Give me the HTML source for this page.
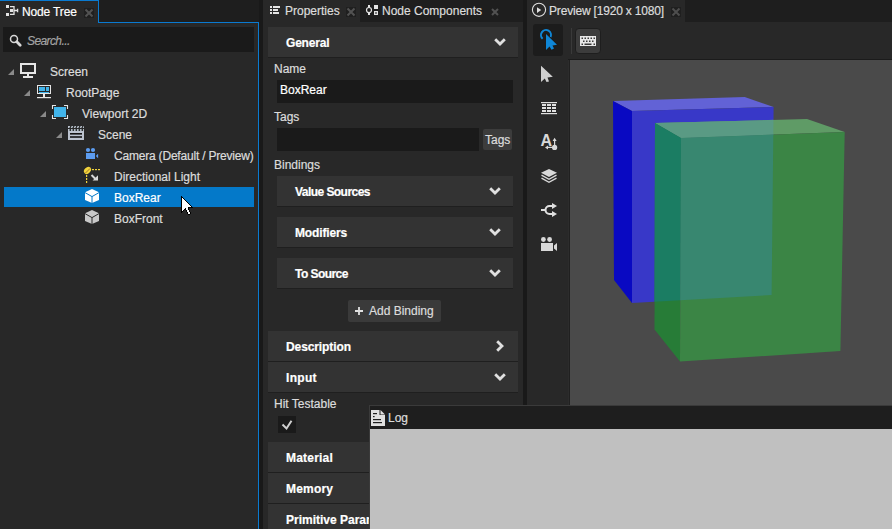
<!DOCTYPE html>
<html><head><meta charset="utf-8">
<style>
*{margin:0;padding:0;box-sizing:border-box}
html,body{width:892px;height:529px;overflow:hidden;background:#1e1e1e;position:relative;font-family:"Liberation Sans",sans-serif}
.a{position:absolute}
.t{position:absolute;font-size:12px;line-height:12px;white-space:nowrap;color:#dcdcdc;-webkit-text-stroke:0.2px currentColor}
.b{font-weight:bold;color:#fff}
.hdr{position:absolute;background:#333;border-bottom:1px solid #1f1f1f;height:31px}
svg{position:absolute;overflow:visible}
</style></head><body>

<!-- ============ NODE TREE PANEL ============ -->
<div class="a" style="left:0;top:0;width:258px;height:529px;background:#282828"></div>
<div class="a" style="left:99px;top:0;width:160px;height:22px;background:#1e1e1e"></div>
<div class="a" style="left:0;top:0;width:99px;height:1px;background:#0a7ad0"></div>
<div class="a" style="left:98px;top:0;width:1px;height:23px;background:#0a7ad0"></div>
<div class="a" style="left:98px;top:22px;width:161px;height:1px;background:#0a7ad0"></div>
<div class="a" style="left:258px;top:22px;width:1px;height:507px;background:#0a7ad0"></div>
<div class="t" style="left:22px;top:6px;color:#fff;letter-spacing:-0.15px">Node Tree</div>

<!-- search -->
<div class="a" style="left:3px;top:27px;width:251px;height:25px;background:#1a1a1a"></div>
<div class="t" style="left:27px;top:35px;font-style:italic;color:#a4a4a4;letter-spacing:-0.6px">Search...</div>

<!-- selection -->
<div class="a" style="left:4px;top:187px;width:250px;height:20px;background:#0479c9"></div>

<div class="t" style="left:50px;top:66px">Screen</div>
<div class="t" style="left:66px;top:87px">RootPage</div>
<div class="t" style="left:82px;top:108px">Viewport 2D</div>
<div class="t" style="left:98px;top:129px">Scene</div>
<div class="t" style="left:114px;top:150px;letter-spacing:-0.2px">Camera (Default / Preview)</div>
<div class="t" style="left:114px;top:171px">Directional Light</div>
<div class="t" style="left:114px;top:192px;color:#fff">BoxRear</div>
<div class="t" style="left:114px;top:213px">BoxFront</div>

<!-- ============ PROPERTIES PANEL ============ -->
<div class="a" style="left:259px;top:0;width:4px;height:529px;background:#191919"></div>
<div class="a" style="left:523px;top:0;width:4px;height:405px;background:#191919"></div>
<div class="a" style="left:263px;top:0;width:97px;height:22px;background:#282828"></div>
<div class="a" style="left:263px;top:22px;width:260px;height:507px;background:#282828"></div>
<div class="t" style="left:285px;top:5px">Properties</div>
<div class="t" style="left:382px;top:5px">Node Components</div>

<div class="hdr" style="left:268px;top:27px;width:250px;"></div>
<div class="t b" style="letter-spacing:-0.2px;left:286px;top:37px">General</div>
<div class="t" style="left:274px;top:63px">Name</div>
<div class="a" style="left:277px;top:80px;width:236px;height:23px;background:#1a1a1a"></div>
<div class="t" style="left:280px;top:84px;color:#fff">BoxRear</div>
<div class="t" style="left:274px;top:111px">Tags</div>
<div class="a" style="left:277px;top:128px;width:202px;height:23px;background:#1a1a1a"></div>
<div class="a" style="left:483px;top:129px;width:29px;height:21px;background:#3c3c3c;border-radius:2px"></div>
<div class="t" style="left:485px;top:134px">Tags</div>
<div class="t" style="left:274px;top:159px">Bindings</div>

<div class="hdr" style="left:277px;top:176px;width:236px;"></div>
<div class="t b" style="letter-spacing:-0.55px;left:295px;top:186px">Value Sources</div>
<div class="hdr" style="left:277px;top:217px;width:236px;"></div>
<div class="t b" style="letter-spacing:-0.15px;left:295px;top:227px">Modifiers</div>
<div class="hdr" style="left:277px;top:258px;width:236px;"></div>
<div class="t b" style="letter-spacing:-0.55px;left:295px;top:268px">To Source</div>

<div class="a" style="left:348px;top:300px;width:93px;height:22px;background:#3a3a3a;border-radius:2px"></div>
<div class="t" style="left:369px;top:305px">Add Binding</div>

<div class="hdr" style="left:268px;top:331px;width:250px;"></div>
<div class="t b" style="letter-spacing:-0.1px;left:286px;top:341px">Description</div>
<div class="hdr" style="left:268px;top:362px;width:250px;"></div>
<div class="t b" style="letter-spacing:0.3px;left:286px;top:372px">Input</div>
<div class="t" style="left:274px;top:398px">Hit Testable</div>
<div class="a" style="left:278px;top:416px;width:18px;height:17px;background:#1a1a1a"></div>

<div class="hdr" style="left:268px;top:442px;width:250px;"></div>
<div class="t b" style="letter-spacing:0.2px;left:286px;top:452px">Material</div>
<div class="hdr" style="left:268px;top:473px;width:250px;"></div>
<div class="t b" style="letter-spacing:0.2px;left:286px;top:483px">Memory</div>
<div class="hdr" style="left:268px;top:504px;width:250px;"></div>
<div class="t b" style="left:286px;top:514px">Primitive Parameters</div>

<!-- ============ PREVIEW PANEL ============ -->
<div class="a" style="left:527px;top:0;width:158px;height:22px;background:#282828"></div>
<div class="a" style="left:527px;top:22px;width:365px;height:383px;background:#282828"></div>
<div class="t" style="left:549px;top:5px;letter-spacing:-0.18px">Preview [1920 x 1080]</div>
<div class="a" style="left:533px;top:24px;width:30px;height:32px;background:#1c1c1c;border-radius:3px"></div>
<div class="a" style="left:571px;top:28px;width:1px;height:26px;background:#3a3a3a"></div>
<div class="a" style="left:575px;top:28px;width:26px;height:26px;background:#3c3c3c;border:1px solid #1e1e1e;border-radius:4px"></div>
<div class="a" style="left:568px;top:59px;width:324px;height:346px;background:#202020"></div>
<div class="a" style="left:568px;top:60px;width:1px;height:345px;background:#2c2c2c"></div>
<div class="a" style="left:568px;top:59px;width:324px;height:1px;background:#1b1b1b"></div>
<div class="a" style="left:570px;top:60px;width:322px;height:345px;background:#4a4a4a"></div>


<svg style="left:0;top:0" width="892" height="529" viewBox="0 0 892 529">
<defs><clipPath id="bf"><polygon points="632,111 773.6,107 771.6,295 632,303"/></clipPath></defs>
<polygon points="613,101 744.7,97 773.6,107 632,111" fill="#6262d6"/>
<polygon points="613,101 632,111 632,303 614,280" fill="#0909c2"/>
<polygon points="632,111 773.6,107 771.6,295 632,303" fill="#3838c8"/>
<polygon points="655,123 807,119 844.7,132 681,138" fill="#5f9b66"/>
<polygon points="655,123 681,138 680,361.5 654.5,329.6" fill="#277c37"/>
<polygon points="681,138 844.7,132 840.4,351 680,361.5" fill="#3b8545"/>
<g clip-path="url(#bf)">
<polygon points="655,123 807,119 844.7,132 681,138" fill="#5a9a84"/>
<polygon points="655,123 681,138 680,361.5 654.5,329.6" fill="#1b7d63"/>
<polygon points="681,138 844.7,132 840.4,351 680,361.5" fill="#388770"/>
</g>
</svg>


<!-- ICONS -->
<svg style="left:0;top:0" width="892" height="529" viewBox="0 0 892 529">
<!-- node tree tab icon -->
<g fill="#e4e4e4"><rect x="6" y="5" width="3" height="3"/><rect x="10" y="9" width="3" height="3"/><rect x="6" y="13" width="3" height="3"/></g>
<path d="M10 6.6H14V14.4H10M14 10.5H17.5M17.6 8.8V12.2" stroke="#e4e4e4" stroke-width="1.3" fill="none"/>
<!-- close X node tree -->
<rect x="84" y="8" width="10" height="10" fill="#1f1f1f"/>
<path d="M85.5 9.5L92.5 16.5M92.5 9.5L85.5 16.5" stroke="#525252" stroke-width="2"/>
<!-- search -->
<circle cx="14" cy="39" r="3.5" stroke="#d8d8d8" stroke-width="1.5" fill="none"/>
<path d="M16.8 41.8L20.2 45.2" stroke="#d8d8d8" stroke-width="2.8" stroke-linecap="round"/>
<!-- expanders -->
<g fill="#8a8a8a">
<polygon points="8,75 14,69 14,75"/>
<polygon points="24,96 30,90 30,96"/>
<polygon points="40,117 46,111 46,117"/>
<polygon points="56,138 62,132 62,138"/>
</g>
<!-- screen icon -->
<g fill="#e6e6e6">
<path d="M20 63H36V74H20ZM22 65V72H34V65Z" fill-rule="evenodd"/>
<rect x="27" y="74" width="2" height="2"/><rect x="23" y="76" width="10" height="2"/>
</g>
<!-- rootpage icon -->
<path d="M37 85H51V94H37ZM38 86V93H50V86Z" fill="#e6e6e6" fill-rule="evenodd"/>
<rect x="43" y="94" width="2" height="3" fill="#e6e6e6"/><rect x="37" y="97" width="14" height="1.2" fill="#e6e6e6"/>
<g fill="#42b4ea"><rect x="39" y="87" width="6" height="4"/><rect x="46" y="87" width="3" height="4"/><rect x="39" y="92" width="10" height="1"/></g>
<!-- viewport icon -->
<rect x="54" y="107" width="12" height="10" fill="#42b4ea"/>
<path d="M52.5 109V105.5H56M64 105.5H67.5V109M67.5 115V118.5H64M56 118.5H52.5V115" stroke="#e6e6e6" stroke-width="1.1" fill="none"/>
<!-- scene clapper -->
<rect x="68" y="126" width="16" height="2" fill="#bcc3cf"/>
<rect x="68" y="129" width="16" height="11" fill="#bcc3cf"/>
<g fill="#141414"><rect x="70" y="133" width="12" height="1.6"/><rect x="70" y="136.2" width="12" height="1.6"/></g>
<g fill="#1a1f1c">
<path d="M69.3 128L70.3 126H71.6L70.6 128Z"/><path d="M72.3 128L73.3 126H74.6L73.6 128Z"/><path d="M75.3 128L76.3 126H77.6L76.6 128Z"/><path d="M78.3 128L79.3 126H80.6L79.6 128Z"/><path d="M81.3 128L82.3 126H83.6L82.6 128Z"/>
<circle cx="70.3" cy="130" r="0.9"/><circle cx="73.3" cy="130" r="0.9"/><circle cx="76.3" cy="130" r="0.9"/><circle cx="79.3" cy="130" r="0.9"/><circle cx="82.3" cy="130" r="0.9"/>
</g>
<!-- camera -->
<g fill="#5c9cf0"><circle cx="88" cy="150" r="2.1"/><circle cx="93" cy="150" r="2.1"/><rect x="86" y="153" width="9" height="6"/><polygon points="95.8,156 98.1,153.8 98.1,158.3"/></g>
<!-- directional light -->
<ellipse cx="87.5" cy="170.4" rx="4" ry="3" transform="rotate(-45 87.5 170.4)" fill="#f2d43c"/>
<path d="M85.5 173L90 168.5" stroke="#8a5a20" stroke-width="0.8"/>
<g fill="#f2d43c"><rect x="92" y="169" width="2" height="1.2"/><rect x="95" y="169" width="2" height="1.2"/><rect x="98" y="169" width="2" height="1.2"/>
<rect x="86" y="175" width="1.2" height="2"/><rect x="86" y="178" width="1.2" height="2"/><rect x="86" y="181" width="1.2" height="2"/></g>
<path d="M91.5 175L95.5 179" stroke="#d8d8d8" stroke-width="2"/>
<polygon points="98,175.3 98,180.6 92.6,180.6" fill="#d8d8d8"/>
<!-- box icons -->
<polygon points="92,189 99,192.2 99,200 92,203 85,200 85,192.2" fill="#fff"/>
<path d="M85 192.6L92 196.6L99 192.6M92 196.6V203" stroke="#0479c9" stroke-width="1" fill="none"/>
<polygon points="92,210 99,213.2 99,221 92,224 85,221 85,213.2" fill="#c8c8c8"/>
<path d="M85 213.6L92 217.6L99 213.6M92 217.6V224" stroke="#282828" stroke-width="1" fill="none"/>
<!-- cursor -->
<path d="M181 196h1v1h-1zM181 197h1v1h-1zM182 197h1v1h-1zM181 198h1v1h-1zM183 198h1v1h-1zM181 199h1v1h-1zM184 199h1v1h-1zM181 200h1v1h-1zM185 200h1v1h-1zM181 201h1v1h-1zM186 201h1v1h-1zM181 202h1v1h-1zM187 202h1v1h-1zM181 203h1v1h-1zM188 203h1v1h-1zM181 204h1v1h-1zM189 204h1v1h-1zM181 205h1v1h-1zM190 205h1v1h-1zM181 206h1v1h-1zM191 206h1v1h-1zM181 207h1v1h-1zM188 207h1v1h-1zM189 207h1v1h-1zM190 207h1v1h-1zM191 207h1v1h-1zM192 207h1v1h-1zM181 208h1v1h-1zM185 208h1v1h-1zM188 208h1v1h-1zM181 209h1v1h-1zM184 209h1v1h-1zM185 209h1v1h-1zM188 209h1v1h-1zM181 210h1v1h-1zM183 210h1v1h-1zM186 210h1v1h-1zM189 210h1v1h-1zM181 211h1v1h-1zM182 211h1v1h-1zM186 211h1v1h-1zM189 211h1v1h-1zM181 212h1v1h-1zM187 212h1v1h-1zM190 212h1v1h-1zM187 213h1v1h-1zM190 213h1v1h-1zM188 214h1v1h-1zM189 214h1v1h-1z" fill="#000"/><path d="M182 198h1v1h-1zM182 199h1v1h-1zM183 199h1v1h-1zM182 200h1v1h-1zM183 200h1v1h-1zM184 200h1v1h-1zM182 201h1v1h-1zM183 201h1v1h-1zM184 201h1v1h-1zM185 201h1v1h-1zM182 202h1v1h-1zM183 202h1v1h-1zM184 202h1v1h-1zM185 202h1v1h-1zM186 202h1v1h-1zM182 203h1v1h-1zM183 203h1v1h-1zM184 203h1v1h-1zM185 203h1v1h-1zM186 203h1v1h-1zM187 203h1v1h-1zM182 204h1v1h-1zM183 204h1v1h-1zM184 204h1v1h-1zM185 204h1v1h-1zM186 204h1v1h-1zM187 204h1v1h-1zM188 204h1v1h-1zM182 205h1v1h-1zM183 205h1v1h-1zM184 205h1v1h-1zM185 205h1v1h-1zM186 205h1v1h-1zM187 205h1v1h-1zM188 205h1v1h-1zM189 205h1v1h-1zM182 206h1v1h-1zM183 206h1v1h-1zM184 206h1v1h-1zM185 206h1v1h-1zM186 206h1v1h-1zM187 206h1v1h-1zM188 206h1v1h-1zM189 206h1v1h-1zM190 206h1v1h-1zM182 207h1v1h-1zM183 207h1v1h-1zM184 207h1v1h-1zM185 207h1v1h-1zM186 207h1v1h-1zM187 207h1v1h-1zM182 208h1v1h-1zM183 208h1v1h-1zM184 208h1v1h-1zM186 208h1v1h-1zM187 208h1v1h-1zM182 209h1v1h-1zM183 209h1v1h-1zM186 209h1v1h-1zM187 209h1v1h-1zM182 210h1v1h-1zM187 210h1v1h-1zM188 210h1v1h-1zM187 211h1v1h-1zM188 211h1v1h-1zM188 212h1v1h-1zM189 212h1v1h-1zM188 213h1v1h-1zM189 213h1v1h-1z" fill="#fff"/>

<!-- properties tab icon -->
<g fill="#e4e4e4"><rect x="270" y="6" width="2" height="2"/><rect x="270" y="9" width="2" height="2"/><rect x="270" y="12" width="2" height="2"/>
<rect x="273" y="6" width="7" height="2"/><rect x="273" y="9" width="5" height="2"/><rect x="273" y="12" width="6" height="2"/></g>
<rect x="346" y="7" width="10" height="10" fill="#1f1f1f"/>
<path d="M347.5 8.5L354.5 15.5M354.5 8.5L347.5 15.5" stroke="#525252" stroke-width="2"/>
<!-- node components icon -->
<path d="M369 5V7.5M369 12.5V15" stroke="#e4e4e4" stroke-width="2"/>
<circle cx="369" cy="10" r="2.5" stroke="#e4e4e4" stroke-width="1.2" fill="none"/>
<rect x="374" y="5" width="4" height="4" fill="#e4e4e4"/>
<path d="M374 11H378V15H374ZM375.3 12.3V13.7H376.7V12.3Z" fill="#e4e4e4" fill-rule="evenodd"/>
<path d="M492 9L498 15M498 9L492 15" stroke="#525252" stroke-width="2"/>

<!-- chevrons -->
<g stroke="#e0e0e0" stroke-width="2.8" fill="none">
<path d="M495.2 39.2L500 44L504.8 39.2"/>
<path d="M490.2 188.2L495 193L499.8 188.2"/>
<path d="M490.2 229.2L495 234L499.8 229.2"/>
<path d="M490.2 270.2L495 275L499.8 270.2"/>
<path d="M497.2 341.2L502 346L497.2 350.8"/>
<path d="M495.2 374.2L500 379L504.8 374.2"/>
</g>
<!-- plus -->
<path d="M355 311H363M359 307V315" stroke="#e0e0e0" stroke-width="1.8"/>
<!-- checkmark -->
<path d="M282.5 424.5L286.5 428.5L291.5 420.8" stroke="#d0d0d0" stroke-width="2" fill="none"/>

<!-- preview tab icon -->
<circle cx="539" cy="9.8" r="6.6" stroke="#e0e0e0" stroke-width="1.1" fill="none"/>
<polygon points="537,7.2 537,13 541.2,10.1" fill="#e0e0e0"/>
<rect x="671" y="7" width="10" height="10" fill="#1f1f1f"/>
<path d="M672.5 8.5L679.5 15.5M679.5 8.5L672.5 15.5" stroke="#4e4e4e" stroke-width="2"/>
<!-- select tool -->
<path d="M542.65 38.72A5 5 0 1 1 550.57 37.03" stroke="#0f86d6" stroke-width="2" fill="none"/>
<path d="M546 34L557 44.7L552.5 45.5L554 48.5L551.5 49.8L549.5 46.5L546 50Z" fill="#0f86d6" stroke="#1c1c1c" stroke-width="1.4" paint-order="stroke"/>
<!-- keyboard -->
<path d="M580 36H596V46H580Z" fill="#e8e8e8"/>
<g fill="#3a3a3a"><rect x="581.5" y="37.5" width="1.5" height="1.5"/><rect x="584.5" y="37.5" width="1.5" height="1.5"/><rect x="587.5" y="37.5" width="1.5" height="1.5"/><rect x="590.5" y="37.5" width="1.5" height="1.5"/><rect x="593.5" y="37.5" width="1.5" height="1.5"/>
<rect x="583" y="40.5" width="1.5" height="1.5"/><rect x="586" y="40.5" width="1.5" height="1.5"/><rect x="589" y="40.5" width="1.5" height="1.5"/><rect x="592" y="40.5" width="1.5" height="1.5"/>
<rect x="581.5" y="43.5" width="1.5" height="1.5"/><rect x="584.5" y="43.5" width="7" height="1.5"/><rect x="593.5" y="43.5" width="1.5" height="1.5"/></g>
<!-- sidebar arrow -->
<path d="M541 65.7L552.8 76.8L547.5 77.5L549 81.5L546.5 82L544.8 78.5L541 82Z" fill="#d0d0d0"/>
<!-- grid -->
<g fill="#e0e0e0"><rect x="541" y="102" width="16" height="1.2"/><rect x="541" y="113" width="16" height="1.2"/>
<rect x="542" y="104" width="4" height="2"/><rect x="547" y="104" width="4" height="2"/><rect x="552" y="104" width="4" height="2"/>
<rect x="542" y="107" width="4" height="2"/><rect x="547" y="107" width="4" height="2"/><rect x="552" y="107" width="4" height="2"/>
<rect x="542" y="110" width="4" height="2"/><rect x="547" y="110" width="4" height="2"/><rect x="552" y="110" width="4" height="2"/></g>
<!-- A icon -->
<text x="540.6" y="146" font-family="Liberation Sans" font-weight="bold" font-size="16" fill="#d8d8d8">A</text>
<circle cx="554.6" cy="147.4" r="2.6" fill="#d8d8d8"/>
<path d="M554.6 147V140M554.6 147.4H547" stroke="#d8d8d8" stroke-width="1.2"/>
<polygon points="552.6,141 556.6,141 554.6,137.8" fill="#d8d8d8"/>
<polygon points="548,145.4 548,149.4 545,147.4" fill="#d8d8d8"/>
<!-- layers -->
<polygon points="541,172.7 549,169 557,172.7 549,177" fill="#d8d8d8"/>
<path d="M541.5 175.2L549 179.3L556.5 175.2M541.5 178.2L549 182.3L556.5 178.2" stroke="#d8d8d8" stroke-width="1.4" fill="none"/>
<!-- branch -->
<path d="M541 210H545.5" stroke="#e0e0e0" stroke-width="2"/>
<path d="M553 206H549.5A4 4 0 0 0 549.5 214H553" stroke="#e0e0e0" stroke-width="2" fill="none"/>
<polygon points="552,203 557,206 552,209" fill="#e0e0e0"/>
<polygon points="552,211 557,214 552,217" fill="#e0e0e0"/>
<!-- camera sidebar -->
<g fill="#d8d8d8"><circle cx="543.4" cy="239.5" r="2.4"/><circle cx="549.6" cy="239.5" r="2.4"/><rect x="541" y="243" width="12" height="8"/><polygon points="554,245.5 557,243 557,251 554,248.5"/></g>
</svg>

<!-- ============ LOG ============ -->
<div class="a" style="left:369px;top:405px;width:523px;height:124px;background:#3a3a3a"></div>
<div class="a" style="left:370px;top:406px;width:522px;height:23px;background:#1e1e1e"></div>
<div class="a" style="left:370px;top:429px;width:522px;height:100px;background:#c0c0c0"></div>
<div class="t" style="left:388px;top:412px">Log</div>


<svg style="left:0;top:0" width="892" height="529" viewBox="0 0 892 529">
<path d="M371 410H379.5V415H385V426H371Z" fill="#e0e0e0"/>
<polygon points="380.5,410 385,414.5 380.5,414.5" fill="#e0e0e0"/>
<g fill="#1e1e1e"><rect x="373" y="413" width="4" height="1.2"/><rect x="373" y="416" width="1.6" height="1.2"/><rect x="373" y="419" width="8" height="1.2"/><rect x="373" y="422" width="9" height="1.2"/></g>
</svg>
</body></html>
